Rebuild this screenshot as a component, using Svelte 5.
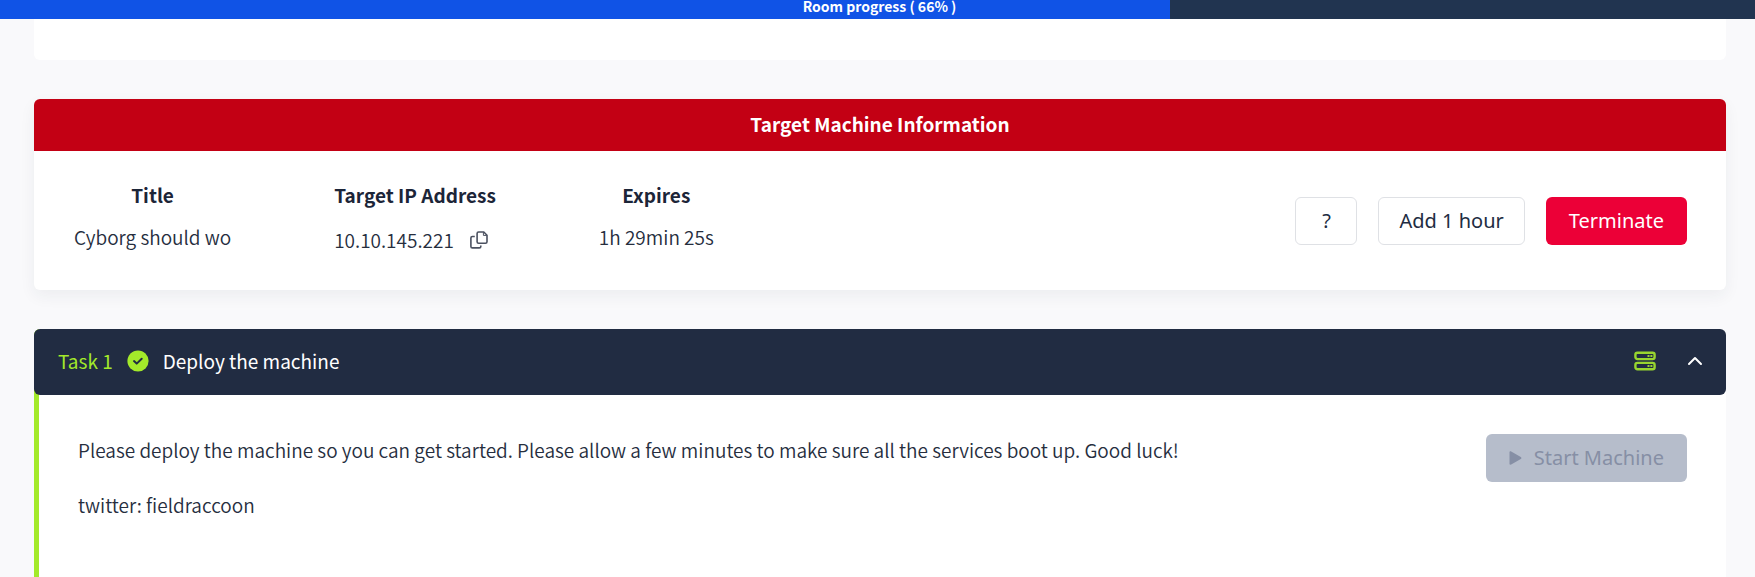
<script>
  let open = $state(true);
  const progress = 200 / 3;
</script>

<div class="progress" role="progressbar" aria-valuenow="66" aria-valuemin="0" aria-valuemax="100" aria-label="Room progress">
  <div class="fill" style="width: {progress}%"></div>
  <span>Room progress ( 66% )</span>
</div>

<main>
  <section class="intro"></section>

  <section class="machine">
    <h2>Target Machine Information</h2>
    <div class="details">
      <dl>
        <div>
          <dt>Title</dt>
          <dd>Cyborg should wo</dd>
        </div>
        <div>
          <dt>Target IP Address</dt>
          <dd class="ip">
            10.10.145.221
            <button class="plain" aria-label="Copy IP address">
              <svg width="18" height="18" viewBox="0 0 18 18" fill="none" stroke="#4b5160" stroke-width="1.6" stroke-linejoin="round">
                <path d="M8.6 1h5.2L17 4.2v6.6a1.5 1.5 0 0 1-1.5 1.5H8.6a1.5 1.5 0 0 1-1.5-1.5V2.5A1.5 1.5 0 0 1 8.6 1Z" />
                <path d="M13.4 1.2v3.2h3.4" stroke-width="1" />
                <path d="M4.8 5.5H2.4A1.5 1.5 0 0 0 .9 7v8.4a1.5 1.5 0 0 0 1.5 1.5h6.9a1.5 1.5 0 0 0 1.5-1.5v-.8" />
              </svg>
            </button>
          </dd>
        </div>
        <div>
          <dt>Expires</dt>
          <dd>1h 29min 25s</dd>
        </div>
      </dl>
      <div class="actions">
        <button class="btn outline help" aria-label="Help">?</button>
        <button class="btn outline">Add 1 hour</button>
        <button class="btn danger">Terminate</button>
      </div>
    </div>
  </section>

  <section class="task">
    <header>
      <span class="number">Task 1</span>
      <svg class="check" width="22" height="22" viewBox="0 0 22 22" aria-hidden="true">
        <circle cx="11" cy="11" r="10.6" fill="#a3ea2a" />
        <path d="m7 11.1 2.7 2.5 5-4.8" fill="none" stroke="#212c42" stroke-width="2" stroke-linecap="round" stroke-linejoin="round" />
      </svg>
      <h3>Deploy the machine</h3>
      <svg class="server" width="22" height="20" viewBox="0 0 22 20" fill="none" stroke="#98d52f" stroke-width="2.4" aria-hidden="true">
        <rect x="1.4" y="1.7" width="19.2" height="6.4" rx="2" />
        <rect x="1.4" y="11.9" width="19.2" height="6.4" rx="2" />
        <path d="M13.5 4.9h2M16.4 4.9h2M13.5 15.1h2M16.4 15.1h2" stroke-width="2" />
      </svg>
      <button class="plain" aria-label="Toggle task" aria-expanded={open} onclick={() => (open = !open)}>
        <svg width="16" height="10" viewBox="0 0 16 10" fill="none" stroke="#fff" stroke-width="2" stroke-linecap="round" stroke-linejoin="round">
          <path d="m2 8 6-6 6 6" />
        </svg>
      </button>
    </header>
    {#if open}
      <div class="body">
        <div class="text">
          <p>Please deploy the machine so you can get started. Please allow a few minutes to make sure all the services boot up. Good luck!</p>
          <p>twitter: fieldraccoon</p>
        </div>
        <button class="btn start" disabled>
          <svg width="13" height="14" viewBox="0 0 13 14" fill="#868fa5" aria-hidden="true">
            <path d="M.5 1.3C.5.4 1.4 0 2.2.4l9.6 5.5c.8.5.8 1.7 0 2.2l-9.6 5.5c-.8.4-1.7 0-1.7-.9Z" />
          </svg>
          Start Machine
        </button>
      </div>
    {/if}
  </section>
</main>

<style>
  :global(body) {
    margin: 0;
    background: #f9f9fb;
    color: #1c2538;
    font-family: "Noto Sans CJK SC", "Noto Sans", sans-serif;
    font-size: 19px;
    line-height: 28px;
  }
  .progress {
    position: relative;
    height: 19px;
    padding-left: 4px;
    background: #213450;
    color: #fff;
    font-size: 14px;
    font-weight: 700;
    line-height: 12px;
    text-align: center;
  }
  .fill {
    position: absolute;
    inset: 0 auto 0 0;
    background: #1053e6;
  }
  .progress span {
    position: relative;
  }
  main {
    display: flex;
    flex-direction: column;
    gap: 39px;
    min-height: calc(100vh - 19px);
    padding: 0 29px 0 34px;
  }
  h2, h3, p, dl, dd {
    margin: 0;
  }
  .intro {
    height: 41px;
    background: #fff;
    border-radius: 0 0 6px 6px;
  }
  .machine {
    background: #fff;
    border-radius: 6px;
    box-shadow: 0 6px 16px rgba(33, 44, 66, 0.06);
  }
  h2 {
    padding-bottom: 2px;
    background: #c30014;
    border-radius: 6px 6px 0 0;
    color: #fff;
    font-size: 19px;
    line-height: 50px;
    text-align: center;
  }
  .details {
    display: flex;
    align-items: flex-start;
    justify-content: space-between;
    padding: 30px 39px 33px 40px;
  }
  dl {
    display: flex;
    gap: 103px;
    text-align: center;
  }
  dt {
    margin-bottom: 14px;
    font-weight: 700;
  }
  dd {
    color: #262e3e;
    font-weight: 350;
  }
  .ip {
    display: flex;
    align-items: center;
    gap: 16px;
    padding-right: 8px;
    line-height: 34px;
  }
  .plain {
    display: flex;
    padding: 0;
    border: 0;
    background: none;
    cursor: pointer;
  }
  .actions {
    display: flex;
    gap: 21px;
    padding-top: 16px;
  }
  .btn {
    display: flex;
    align-items: center;
    justify-content: center;
    gap: 12px;
    box-sizing: border-box;
    height: 48px;
    padding: 0 22px;
    border: 1px solid transparent;
    border-radius: 6px;
    font: 20px/28px "Noto Sans", sans-serif;
  }
  .outline {
    padding: 0 20px;
    border-color: #dfe1e5;
    background: #fff;
    color: #212c42;
  }
  .help {
    width: 62px;
  }
  .danger {
    background: #ec0037;
    color: #fff;
  }
  .start {
    flex: none;
    background: #b6bdcb;
    color: #868fa5;
  }
  header {
    display: flex;
    align-items: center;
    box-sizing: border-box;
    height: 66px;
    padding: 0 23px 2px 24px;
    background: #212c42;
    border-radius: 6px;
    color: #fff;
  }
  .number {
    color: #a3ea2a;
  }
  .check {
    margin: 0 14px;
  }
  h3 {
    font-size: 19px;
    font-weight: 400;
  }
  .server {
    margin: 0 31px 0 auto;
  }
  .task {
    flex: 1;
    background: linear-gradient(90deg, #a3ea2a 5px, #fff 5px);
    border-radius: 6px 6px 0 0;
  }
  .body {
    display: flex;
    align-items: flex-start;
    justify-content: space-between;
    padding: 39px 39px 0 44px;
  }
  .text {
    display: flex;
    flex-direction: column;
    gap: 27px;
    padding-top: 2px;
    color: #262e3e;
    font-weight: 350;
  }
</style>
